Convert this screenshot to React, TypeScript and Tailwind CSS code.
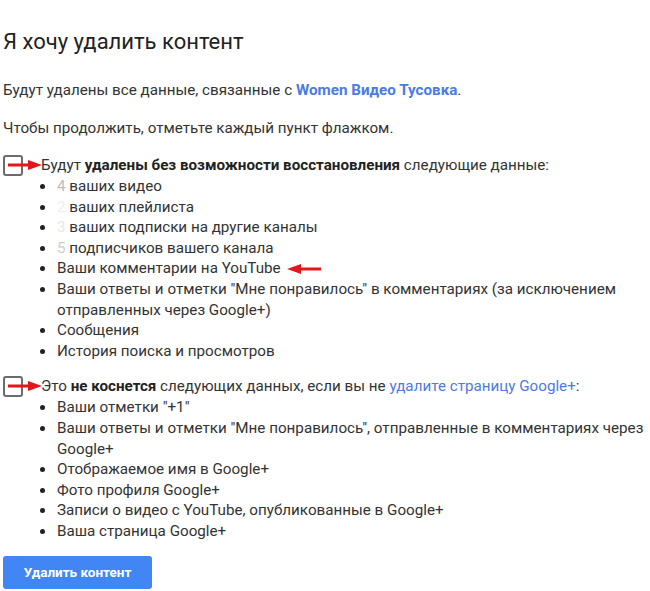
import React from "react";

const Arrow = ({ dir = "right" }: { dir?: "right" | "left" }) => (
  <svg width="34" height="10" viewBox="0 0 34 10" className="block">
    {dir === "right" ? (
      <>
        <rect x="0" y="3.5" width="22" height="3" fill="#e3161b" />
        <polygon points="20,0 34,5 20,10" fill="#e3161b" />
      </>
    ) : (
      <>
        <rect x="12" y="3.5" width="22" height="3" fill="#e3161b" />
        <polygon points="14,0 0,5 14,10" fill="#e3161b" />
      </>
    )}
  </svg>
);

const CheckRow = ({ children }: { children: React.ReactNode }) => (
  <div className="relative flex items-center h-[22px]">
    <div className="w-[20px] h-[21px] border-2 border-[#6b6b6b] rounded-[3px] bg-white ml-[3px]" />
    <div className="absolute left-[8px] top-[6px]">
      <Arrow />
    </div>
    <div className="ml-[18px]">{children}</div>
  </div>
);

const Li = ({ children }: { children: React.ReactNode }) => (
  <div className="flex">
    <span className="w-[57px] shrink-0 flex justify-end pr-[12px]">
      <span className="mt-[8px] w-[5px] h-[5px] rounded-full bg-[#222]" />
    </span>
    <span>{children}</span>
  </div>
);

export default function App() {
  return (
    <div
      className="w-[650px] h-[591px] bg-white text-[#333] overflow-hidden"
      style={{ fontFamily: "Roboto, 'Noto Sans', sans-serif" }}
    >
      <div className="pl-[3px] pt-[28px] text-[22px] leading-[28px] text-[#222]">
        Я хочу удалить контент
      </div>
      <div className="pl-[3px] mt-[24px] text-[15.2px] leading-[20px]">
        Будут удалены все данные, связанные с{" "}
        <span className="font-bold text-[#4a7be6]">Women Видео Тусовка</span>.
      </div>
      <div className="pl-[3px] mt-[18px] text-[15.2px] leading-[20px]">
        Чтобы продолжить, отметьте каждый пункт флажком.
      </div>

      <div className="mt-[16px] text-[15.2px] leading-[20.6px]">
        <CheckRow>
          Будут <b className="text-[#222]">удалены без возможности восстановления</b> следующие данные:
        </CheckRow>
        <Li>
          <span className="text-[#bbb]">4</span> ваших видео
        </Li>
        <Li>
          <span className="text-[#eee]">2</span> ваших плейлиста
        </Li>
        <Li>
          <span className="text-[#e6e6e6]">3</span> ваших подписки на другие каналы
        </Li>
        <Li>
          <span className="text-[#ccc]">5</span> подписчиков вашего канала
        </Li>
        <Li>
          <span className="inline-flex items-center">
            Ваши комментарии на YouTube
            <span className="ml-[6px]">
              <Arrow dir="left" />
            </span>
          </span>
        </Li>
        <Li>
          Ваши ответы и отметки "Мне понравилось" в комментариях (за исключением
          <br />
          отправленных через Google+)
        </Li>
        <Li>Сообщения</Li>
        <Li>История поиска и просмотров</Li>

        <div className="mt-[14px]">
          <CheckRow>
            Это <b className="text-[#222]">не коснется</b> следующих данных, если вы не{" "}
            <span className="text-[#4d7be0]">удалите страницу Google+</span>:
          </CheckRow>
        </div>
        <Li>Ваши отметки "+1"</Li>
        <Li>
          Ваши ответы и отметки "Мне понравилось", отправленные в комментариях через
          <br />
          Google+
        </Li>
        <Li>Отображаемое имя в Google+</Li>
        <Li>Фото профиля Google+</Li>
        <Li>Записи о видео с YouTube, опубликованные в Google+</Li>
        <Li>Ваша страница Google+</Li>
      </div>

      <div className="pl-[3px] mt-[14px]">
        <button className="w-[149px] h-[33px] rounded-[3px] bg-[#4285f4] text-white text-[13.5px] font-bold">
          Удалить контент
        </button>
      </div>
    </div>
  );
}
